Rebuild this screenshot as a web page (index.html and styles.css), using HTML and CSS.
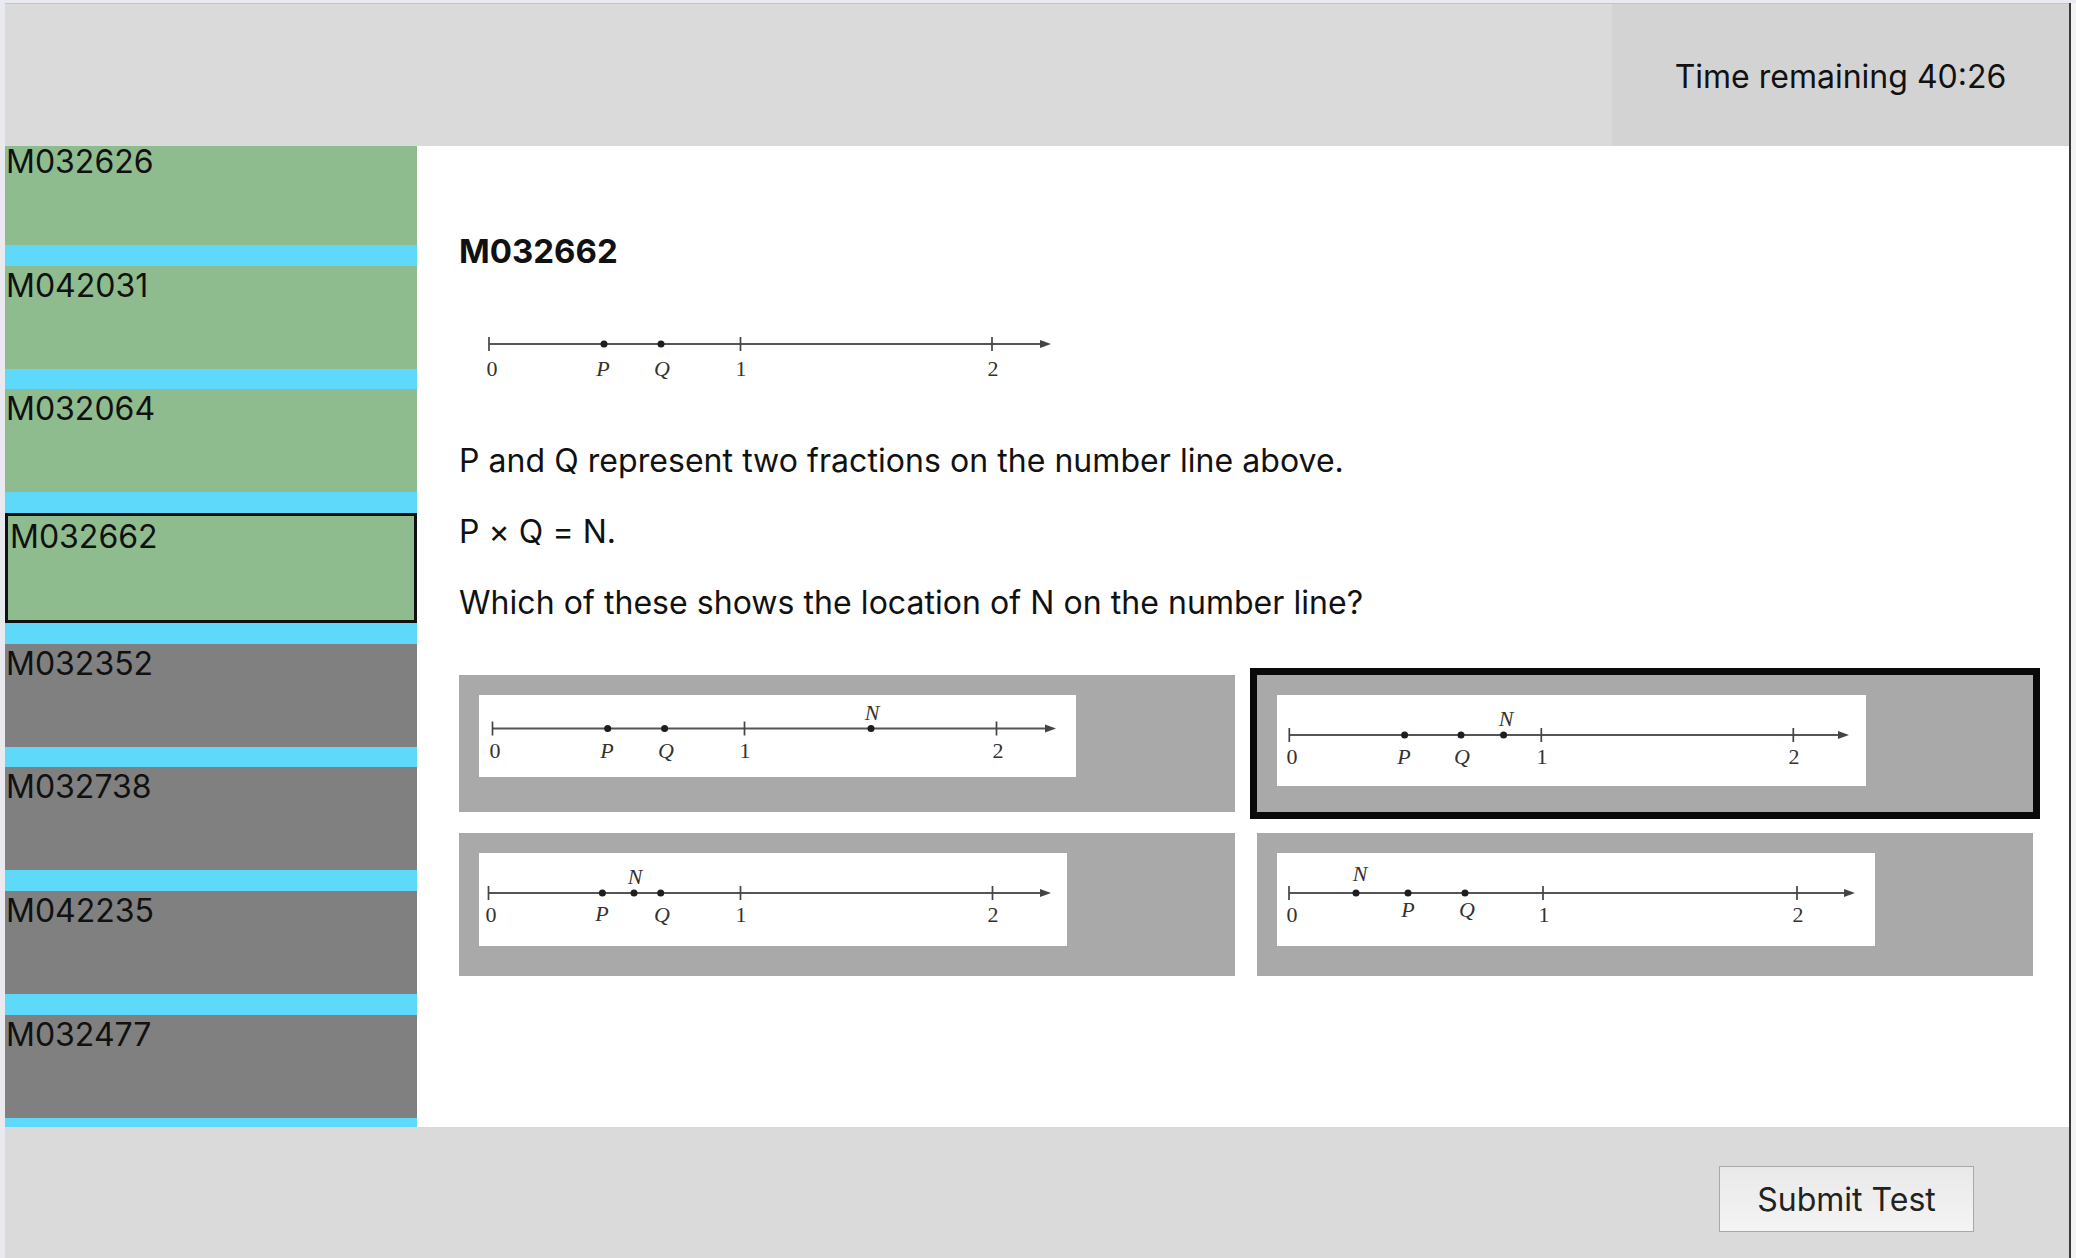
FILE: index.html
```html
<!DOCTYPE html>
<html lang="en">
<head>
<meta charset="utf-8">
<title>Test</title>
<link rel="stylesheet" href="styles.css">
</head>
<body>
<div class="screen">
  <div class="window">
    <header class="topbar">
      <div class="timer">Time remaining 40:26</div>
    </header>
    <nav class="sidebar">
      <ul class="qlist">
        <li class="qitem done">M032626</li>
        <li class="qitem done">M042031</li>
        <li class="qitem done">M032064</li>
        <li class="qitem done current">M032662</li>
        <li class="qitem">M032352</li>
        <li class="qitem">M032738</li>
        <li class="qitem">M042235</li>
        <li class="qitem">M032477</li>
      </ul>
    </nav>
    <main class="content">
      <h1 class="qtitle">M032662</h1>
      <svg class="numline stem" width="600" height="80" viewBox="0 0 600 80">
        <line class="nl-axis" x1="17" y1="34" x2="572" y2="34"/>
        <polygon class="nl-arrow" points="579,34 568,30 568,38"/>
        <line class="nl-tick" x1="17" y1="27" x2="17" y2="41"/>
        <line class="nl-tick" x1="268.5" y1="27" x2="268.5" y2="41"/>
        <line class="nl-tick" x1="520" y1="27" x2="520" y2="41"/>
        <circle class="nl-dot" cx="132" cy="34" r="3.5"/>
        <circle class="nl-dot" cx="189" cy="34" r="3.5"/>
        <text class="nl-num" x="20" y="66">0</text>
        <text class="nl-var" x="131" y="66">P</text>
        <text class="nl-var" x="190" y="66">Q</text>
        <text class="nl-num" x="269" y="66">1</text>
        <text class="nl-num" x="521" y="66">2</text>
      </svg>
      <p class="qtext">P and Q represent two fractions on the number line above.</p>
      <p class="qtext">P × Q = N.</p>
      <p class="qtext">Which of these shows the location of N on the number line?</p>
      <div class="options">
        <div class="option">
          <svg class="numline" width="597" height="82" viewBox="0 0 597 82">
            <line class="nl-axis" x1="13.5" y1="33.5" x2="570" y2="33.5"/>
            <polygon class="nl-arrow" points="577,33.5 566,29.5 566,37.5"/>
            <line class="nl-tick" x1="13.5" y1="26.5" x2="13.5" y2="40.5"/>
            <line class="nl-tick" x1="265.5" y1="26.5" x2="265.5" y2="40.5"/>
            <line class="nl-tick" x1="517.5" y1="26.5" x2="517.5" y2="40.5"/>
            <circle class="nl-dot" cx="128.7" cy="33.5" r="3.5"/>
            <circle class="nl-dot" cx="185.6" cy="33.5" r="3.5"/>
            <circle class="nl-dot" cx="392" cy="33.5" r="3.5"/>
            <text class="nl-var" x="393" y="25">N</text>
            <text class="nl-num" x="16" y="63">0</text>
            <text class="nl-var" x="128" y="63">P</text>
            <text class="nl-var" x="187" y="63">Q</text>
            <text class="nl-num" x="266" y="63">1</text>
            <text class="nl-num" x="519" y="63">2</text>
          </svg>
        </div>
        <div class="option selected">
          <svg class="numline" width="589" height="91" viewBox="0 0 589 91">
            <line class="nl-axis" x1="12.3" y1="40" x2="565" y2="40"/>
            <polygon class="nl-arrow" points="572,40 561,36 561,44"/>
            <line class="nl-tick" x1="12.3" y1="33" x2="12.3" y2="47"/>
            <line class="nl-tick" x1="264.3" y1="33" x2="264.3" y2="47"/>
            <line class="nl-tick" x1="516.3" y1="33" x2="516.3" y2="47"/>
            <circle class="nl-dot" cx="127.6" cy="40" r="3.5"/>
            <circle class="nl-dot" cx="184" cy="40" r="3.5"/>
            <circle class="nl-dot" cx="226.6" cy="40" r="3.5"/>
            <text class="nl-var" x="229" y="31">N</text>
            <text class="nl-num" x="15" y="69">0</text>
            <text class="nl-var" x="127" y="69">P</text>
            <text class="nl-var" x="185" y="69">Q</text>
            <text class="nl-num" x="265" y="69">1</text>
            <text class="nl-num" x="517" y="69">2</text>
          </svg>
        </div>
        <div class="option">
          <svg class="numline" width="588" height="93" viewBox="0 0 588 93">
            <line class="nl-axis" x1="9.5" y1="40" x2="565" y2="40"/>
            <polygon class="nl-arrow" points="572,40 561,36 561,44"/>
            <line class="nl-tick" x1="9.5" y1="33" x2="9.5" y2="47"/>
            <line class="nl-tick" x1="261.5" y1="33" x2="261.5" y2="47"/>
            <line class="nl-tick" x1="513.5" y1="33" x2="513.5" y2="47"/>
            <circle class="nl-dot" cx="123.4" cy="40" r="3.5"/>
            <circle class="nl-dot" cx="155" cy="40" r="3.5"/>
            <circle class="nl-dot" cx="181.7" cy="40" r="3.5"/>
            <text class="nl-var" x="156" y="31">N</text>
            <text class="nl-num" x="12" y="69">0</text>
            <text class="nl-var" x="123" y="68">P</text>
            <text class="nl-var" x="183" y="69">Q</text>
            <text class="nl-num" x="262" y="69">1</text>
            <text class="nl-num" x="514" y="69">2</text>
          </svg>
        </div>
        <div class="option">
          <svg class="numline" width="598" height="93" viewBox="0 0 598 93">
            <line class="nl-axis" x1="12" y1="40" x2="571" y2="40"/>
            <polygon class="nl-arrow" points="578,40 567,36 567,44"/>
            <line class="nl-tick" x1="12" y1="33" x2="12" y2="47"/>
            <line class="nl-tick" x1="266" y1="33" x2="266" y2="47"/>
            <line class="nl-tick" x1="520" y1="33" x2="520" y2="47"/>
            <circle class="nl-dot" cx="79" cy="40" r="3.5"/>
            <circle class="nl-dot" cx="131" cy="40" r="3.5"/>
            <circle class="nl-dot" cx="188" cy="40" r="3.5"/>
            <text class="nl-var" x="83" y="28">N</text>
            <text class="nl-num" x="15" y="69">0</text>
            <text class="nl-var" x="131" y="64">P</text>
            <text class="nl-var" x="190" y="64">Q</text>
            <text class="nl-num" x="267" y="69">1</text>
            <text class="nl-num" x="521" y="69">2</text>
          </svg>
        </div>
      </div>
    </main>
    <footer class="bottombar">
      <button class="submit" type="button">Submit Test</button>
    </footer>
  </div>
  <div class="edge"></div>
</div>
</body>
</html>
```
FILE: styles.css
```css
* { box-sizing: border-box; }

html, body {
  margin: 0;
  padding: 0;
  width: 2076px;
  height: 1258px;
  overflow: hidden;
  background: #e9eaef;
  font-family: Inter, "Noto Sans", "Liberation Sans", sans-serif;
  color: #111;
}

.screen {
  display: flex;
  height: 1258px;
  padding-left: 5px;
  padding-top: 3px;
}

.window {
  width: 2064px;
  height: 1255px;
  border-top: 1px solid #c4c4c4;
  display: grid;
  grid-template-columns: 412px 1fr;
  grid-template-rows: 142px 981px 131px;
  background: #fff;
}

.edge {
  flex: 1;
  border-left: 2px solid #3a3a3a;
  background: #f3f3f3;
}

/* header */
.topbar {
  grid-column: 1 / 3;
  background: #dadada;
  display: flex;
  justify-content: flex-end;
}

.timer {
  width: 457px;
  background: #d3d3d3;
  display: flex;
  align-items: center;
  justify-content: center;
  font-size: 32px;
  padding-top: 3px;
}

/* sidebar */
.sidebar {
  background: #5fd9fa;
  overflow: hidden;
}

.qlist {
  list-style: none;
  margin: 0;
  padding: 0;
}

.qitem {
  height: 103px;
  margin-bottom: 20.7px;
  background: #808080;
  font-size: 32px;
  line-height: 31px;
  padding: 4px 0 0 1px;
}

.qitem:first-child {
  height: 99px;
  padding-top: 0;
}

.qitem.done {
  background: #8fbc8f;
}

.qitem.current {
  height: 110px;
  border: 3px solid #111;
  padding: 5px 0 0 2px;
}

/* main */
.content {
  padding: 86px 38px 0 42px;
  overflow: hidden;
}

.qtitle {
  margin: 0;
  font-size: 33px;
  font-weight: 700;
  line-height: 39px;
}

.numline {
  display: block;
  background: #fff;
}

.numline.stem {
  margin: 39px 0 0 13px;
}

.qtext {
  margin: 52px 0 0 0;
  font-size: 32px;
  line-height: 38px;
  letter-spacing: 0.05px;
}

.qtext + .qtext {
  margin-top: 33px;
}

.options {
  margin-top: 53px;
  display: grid;
  grid-template-columns: 776px 776px;
  grid-template-rows: 137px 143px;
  column-gap: 22px;
  row-gap: 21px;
}

.option {
  background: #a9a9a9;
  padding: 20px 0 0 20px;
}

.option.selected {
  outline: 7px solid #0a0a0a;
  outline-offset: 0;
}

.nl-axis {
  stroke: #555;
  stroke-width: 2.2;
}

.nl-tick {
  stroke: #444;
  stroke-width: 1.7;
}

.nl-arrow {
  fill: #444;
}

.nl-dot {
  fill: #1e1e1e;
}

.nl-num,
.nl-var {
  font-family: "Liberation Serif", "DejaVu Serif", serif;
  font-size: 22px;
  fill: #35322f;
  text-anchor: middle;
}

.nl-var {
  font-style: italic;
}

/* footer */
.bottombar {
  grid-column: 1 / 3;
  background: #dadada;
  display: flex;
  justify-content: flex-end;
  align-items: flex-start;
  padding: 39px 95px 0 0;
}

.submit {
  width: 255px;
  height: 66px;
  border: 1px solid #a8a8a8;
  background: linear-gradient(#e9e9e9, #f4f4f4);
  font-family: Inter, "Noto Sans", "Liberation Sans", sans-serif;
  font-size: 32px;
  color: #222;
  padding: 0;
}
```
